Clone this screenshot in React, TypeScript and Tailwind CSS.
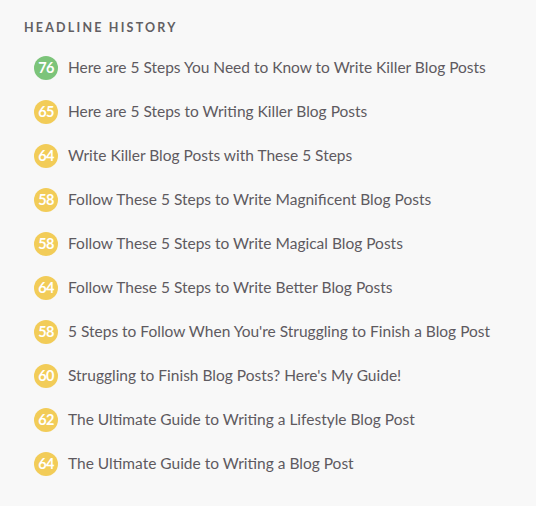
import React from 'react';

const headlines = [
  { score: 76, text: 'Here are 5 Steps You Need to Know to Write Killer Blog Posts' },
  { score: 65, text: 'Here are 5 Steps to Writing Killer Blog Posts' },
  { score: 64, text: 'Write Killer Blog Posts with These 5 Steps' },
  { score: 58, text: 'Follow These 5 Steps to Write Magnificent Blog Posts' },
  { score: 58, text: 'Follow These 5 Steps to Write Magical Blog Posts' },
  { score: 64, text: 'Follow These 5 Steps to Write Better Blog Posts' },
  { score: 58, text: "5 Steps to Follow When You're Struggling to Finish a Blog Post" },
  { score: 60, text: "Struggling to Finish Blog Posts? Here's My Guide!" },
  { score: 62, text: 'The Ultimate Guide to Writing a Lifestyle Blog Post' },
  { score: 64, text: 'The Ultimate Guide to Writing a Blog Post' },
];

function ScoreBadge({ score }: { score: number }) {
  const good = score >= 70;
  return (
    <div
      className={`w-6 h-6 rounded-full flex items-center justify-center shrink-0 text-white font-bold text-[14.5px] tracking-[-0.6px] ${
        good ? 'bg-[#7cc47a]' : 'bg-[#f2cc58]'
      }`}
    >
      {score}
    </div>
  );
}

export default function App() {
  return (
    <div
      className="w-[536px] h-[506px] bg-[#f8f8f8] pl-[34px] pt-[20px]"
      style={{ fontFamily: 'Lato, "Open Sans", sans-serif' }}
    >
      <h2 className="text-[12.5px] font-bold tracking-[2.2px] text-[#625f63] -ml-[10px] leading-[16px]">
        HEADLINE HISTORY
      </h2>
      <ul className="mt-[20px] flex flex-col gap-[20px]">
        {headlines.map((h, i) => (
          <li key={i} className="flex items-center gap-[10px] h-6">
            <ScoreBadge score={h.score} />
            <span className="text-[15.5px] text-[#5e5a60]">{h.text}</span>
          </li>
        ))}
      </ul>
    </div>
  );
}
